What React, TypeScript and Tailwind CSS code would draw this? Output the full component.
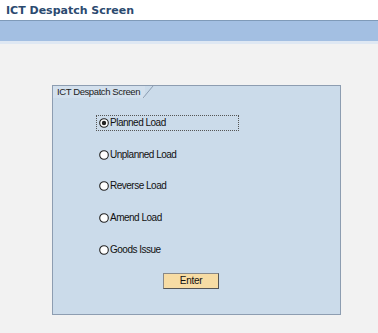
import React, { useState } from 'react';

const options = ['Planned Load', 'Unplanned Load', 'Reverse Load', 'Amend Load', 'Goods Issue'];

function Radio({ checked }: { checked: boolean }) {
  return (
    <svg width="10" height="10" viewBox="0 0 10 10" className="shrink-0">
      <circle cx="5" cy="5" r="4.3" fill="#fff" stroke="#222" strokeWidth="1.1" />
      {checked && <circle cx="5" cy="5" r="2.2" fill="#222" />}
    </svg>
  );
}

export default function App() {
  const [selected, setSelected] = useState(0);

  return (
    <div className="w-[378px] h-[333px] bg-[#f2f2f2] flex flex-col" style={{ fontFamily: '"Liberation Sans", sans-serif' }}>
      <div className="h-[21px] bg-white border-b border-[#7f9ab8] px-[6px] flex items-center">
        <h1 className="text-[11px] font-bold text-[#2b4a6f] leading-none pt-[1px]" style={{ fontFamily: '"DejaVu Sans", sans-serif' }}>
          ICT Despatch Screen
        </h1>
      </div>
      <div className="h-[20px] bg-[#a3bfe2]" />
      <div className="h-[3px] bg-[#dfe8f3]" />

      <div className="pl-[52px] pt-[41px]">
        <div className="w-[289px] h-[230px] bg-[#cbdbea] border border-[#8d9db1] flex flex-col">
          <div className="h-[12px] relative">
            <div className="h-[12px] w-[92px] bg-[#d3e0ed] flex items-center pl-[4px] text-[9.5px] tracking-[-0.4px] whitespace-nowrap text-[#222] leading-none">
              ICT Despatch Screen
            </div>
            <svg className="absolute left-[90px] top-0" width="12" height="12" viewBox="0 0 12 12">
              <path d="M0 12 L10 0" stroke="#8d9db1" strokeWidth="1" fill="none" />
            </svg>
          </div>
          <div className="flex flex-col pl-[44px] pt-[18px] gap-[17.7px]">
            {options.map((o, i) => (
              <button
                key={o}
                onClick={() => setSelected(i)}
                className={`flex items-center gap-[1px] h-[14px] w-[141px] text-[10px] text-[#111] leading-none ${i === 0 ? 'outline-1 outline-dotted outline-[#555]' : ''}`}
              >
                <span className="pl-[2px] flex items-center">
                  <Radio checked={selected === i} />
                </span>
                <span className="tracking-[-0.5px]">{o}</span>
              </button>
            ))}
          </div>
          <div className="pl-[110px] pt-[10px]">
            <button className="w-[56px] h-[16px] bg-[#f7dca4] border border-[#555] border-t-[#888] border-l-[#888] text-[10px] tracking-[-0.3px] text-[#111] leading-none">
              Enter
            </button>
          </div>
        </div>
      </div>
    </div>
  );
}
